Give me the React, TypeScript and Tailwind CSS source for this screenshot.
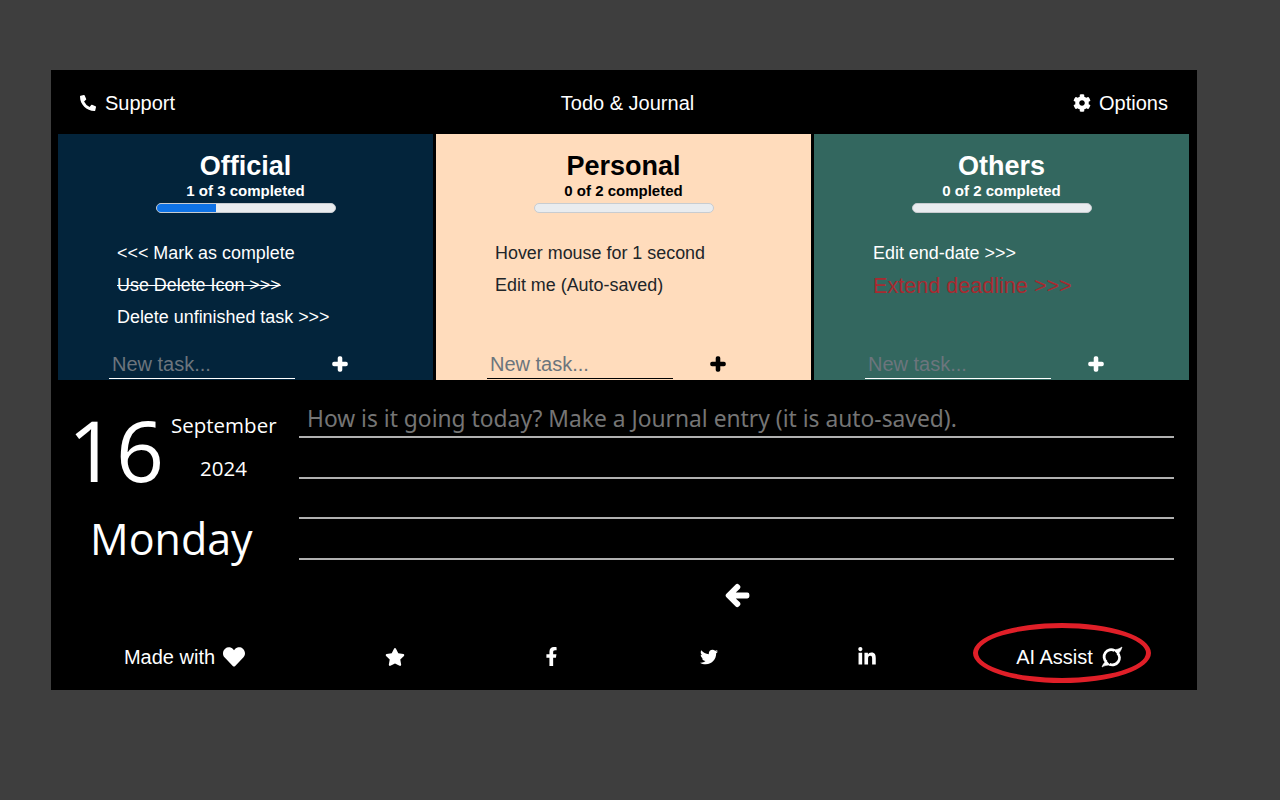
import React from "react";
import { FaPhoneAlt, FaCog, FaPlus, FaHeart, FaStar, FaFacebookF, FaTwitter, FaLinkedinIn, FaArrowLeft } from "react-icons/fa";

type Task = { text: string; cls?: string };
type Col = { title: string; sub: string; pct: number; bg: string; text: string; tasks: Task[] };

function Column({ title, sub, pct, bg, text, tasks }: Col) {
  return (
    <div className={`flex h-[246px] w-[375px] flex-col items-center ${bg} ${text}`}>
      <div className="mt-[16px] text-[27px] leading-[32px] font-bold">{title}</div>
      <div className="text-[15px] leading-[18px] font-bold">{sub}</div>
      <div className="mt-[3px] h-[10px] w-[180px] overflow-hidden rounded-[5px] border border-[#c8ccd0] bg-[#e9ecef]">
        {pct > 0 && <div className="h-full bg-[#0f73e6]" style={{ width: `${pct}%` }} />}
      </div>
      <div className="mt-[24px] flex h-[96px] w-full flex-col pl-[59px]">
        {tasks.map((t) => (
          <div key={t.text} className={`h-[32px] text-[17.92px] leading-[32px] ${t.cls ?? ""}`}>{t.text}</div>
        ))}
      </div>
      <div className="mt-[18px] flex h-[28px] w-full items-start pl-[51px]">
        <div className={`h-[28px] w-[186px] border-b pl-[3px] text-[20px] leading-[27px] text-[#6c757d] ${text === "text-white" ? "border-white" : "border-black"}`}>New task...</div>
        <FaPlus className="mt-[5px] ml-[37px] text-[16px]" strokeWidth={50} />
      </div>
    </div>
  );
}

function JournalLine({ children, h }: { children?: React.ReactNode; h: string }) {
  return <div className={`border-b-2 border-[#b0b0b0] pl-[8px] ${h}`}>{children}</div>;
}

export default function App() {
  return (
    <div className="min-h-screen bg-[#3e3e3e] pt-[70px] pl-[51px] font-['Liberation_Sans',Arial,sans-serif]">
      <div className="relative h-[620px] w-[1146px] bg-black text-white">
        <div className="flex h-[64px] items-center justify-between px-[29px] pt-[2px] text-[20px]">
          <div className="flex w-[200px] items-center gap-[9px]"><FaPhoneAlt className="text-[16px]" />Support</div>
          <div className="ml-[7px]">Todo &amp; Journal</div>
          <div className="flex w-[200px] items-center justify-end gap-[8px]"><FaCog className="text-[18px]" />Options</div>
        </div>
        <div className="flex gap-[3px] pl-[7px]">
          <Column title="Official" sub="1 of 3 completed" pct={33.3} bg="bg-[#03243b]" text="text-white" tasks={[{ text: "<<< Mark as complete" }, { text: "Use Delete Icon >>>", cls: "line-through" }, { text: "Delete unfinished task >>>" }]} />
          <Column title="Personal" sub="0 of 2 completed" pct={0} bg="bg-[#ffdcbc]" text="text-black" tasks={[{ text: "Hover mouse for 1 second", cls: "text-[#212529]" }, { text: "Edit me (Auto-saved)", cls: "text-[#212529]" }]} />
          <Column title="Others" sub="0 of 2 completed" pct={0} bg="bg-[#33675f]" text="text-white" tasks={[{ text: "Edit end-date >>>" }, { text: "Extend deadline >>>", cls: "!text-[21.6px] !leading-[33px] text-[#a82a30]" }]} />
        </div>
        <div className="flex h-[181px]">
          <div className="relative w-[248px] shrink-0 font-['Open_Sans',sans-serif]">
            <div className="absolute top-[14px] left-[17px] text-[84px] leading-[112px]">16</div>
            <div className="absolute top-[30px] left-[120px] text-[20.5px] leading-[30px]">September</div>
            <div className="absolute top-[73px] left-[149px] text-[20.5px] leading-[30px]">2024</div>
            <div className="absolute top-[127px] left-[39px] text-[43px] leading-[64px]">Monday</div>
          </div>
          <div className="mt-[17px] w-[875px] text-[22.8px] leading-[43px] text-[#757575] font-['Noto_Sans',sans-serif]">
            <JournalLine h="h-[41px]">How is it going today? Make a Journal entry (it is auto-saved).</JournalLine>
            <JournalLine h="h-[41px]" />
            <JournalLine h="h-[40px]" />
            <JournalLine h="h-[41px]" />
          </div>
        </div>
        <div className="flex h-[68px] items-start justify-center pl-[226px]"><FaArrowLeft className="mt-[22px] text-[25px]" strokeWidth={40} /></div>
        <div className="flex h-[54px] items-center pt-[2px] text-[20px]">
          <div className="flex w-[267px] items-center justify-center gap-[8px]">Made with <FaHeart className="text-[22px]" /></div>
          <div className="flex w-[153px] justify-center"><FaStar className="text-[20px]" /></div>
          <div className="flex w-[161px] justify-center"><FaFacebookF className="mt-[-2px] text-[19px]" /></div>
          <div className="flex w-[153px] justify-center"><FaTwitter className="text-[18px]" /></div>
          <div className="flex w-[163px] justify-center"><FaLinkedinIn className="text-[20px]" /></div>
          <div className="flex w-[243px] items-center justify-center gap-[8px]">AI Assist
            <svg width="22" height="22" viewBox="0 0 22 22" fill="none" stroke="currentColor">
              <path d="M13.5 4.6 A7 7 0 0 0 5.5 16" strokeWidth="2.8" />
              <path d="M8.5 18.2 A7 7 0 0 0 16.5 7" strokeWidth="2.8" />
              <path d="M12 3.6 C15.5 4 18.5 2.8 21 1 C20 4.6 18.6 6.6 16.5 8.2" fill="currentColor" strokeWidth="0.6" />
              <path d="M9.5 19.2 C6 18.8 3.5 19.6 1 21 C2 18.4 3.4 16.4 5.5 14.8" fill="currentColor" strokeWidth="0.6" />
            </svg>
          </div>
        </div>
        <div className="absolute top-[553px] left-[922px] h-[60px] w-[178px] rounded-[50%] border-[5px] border-[#e01f28]" />
      </div>
    </div>
  );
}
